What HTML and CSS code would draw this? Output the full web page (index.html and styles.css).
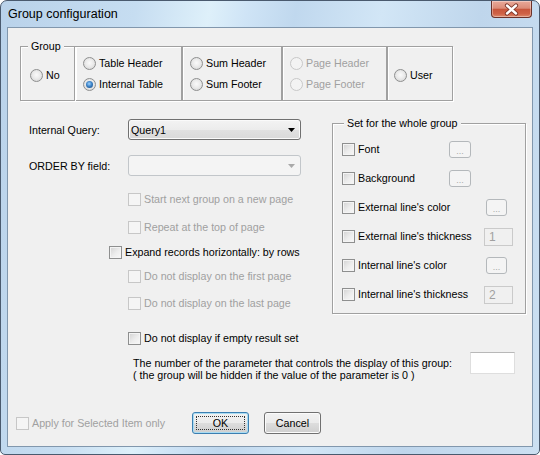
FILE: index.html
```html
<!DOCTYPE html>
<html>
<head>
<meta charset="utf-8">
<link rel="stylesheet" href="styles.css">
</head>
<body>
<div class="window">
  <div class="titlebar">
    <span class="title">Group configuration</span>
    <div class="close">
      <svg width="39" height="15" viewBox="0 0 39 15">
        <path d="M15 3.5 L24 11.5 M24 3.5 L15 11.5" stroke="#7a3326" stroke-width="4.2" stroke-linecap="round"/>
        <path d="M15 3.5 L24 11.5 M24 3.5 L15 11.5" stroke="#ffffff" stroke-width="2.4" stroke-linecap="round"/>
      </svg>
    </div>
  </div>
  <div class="client">
    <div class="group-row">
      <div class="gbox g-group">
        <span class="legend">Group</span>
        <label class="opt"><span class="radio"></span>No</label>
      </div>
      <div class="gbox g-table">
        <label class="opt"><span class="radio"></span>Table Header</label>
        <label class="opt"><span class="radio on"></span>Internal Table</label>
      </div>
      <div class="gbox g-sum">
        <label class="opt"><span class="radio"></span>Sum Header</label>
        <label class="opt"><span class="radio"></span>Sum Footer</label>
      </div>
      <div class="gbox g-page">
        <label class="opt dis"><span class="radio"></span>Page Header</label>
        <label class="opt dis"><span class="radio"></span>Page Footer</label>
      </div>
      <div class="gbox g-user">
        <label class="opt"><span class="radio"></span>User</label>
      </div>
    </div>

    <div class="main">
      <div class="left">
        <div class="frow">
          <span class="flabel">Internal Query:</span>
          <div class="combo"><span>Query1</span><svg width="7" height="4" viewBox="0 0 7 4"><path d="M0 0H7L3.5 4Z" fill="#000"/></svg></div>
        </div>
        <div class="frow">
          <span class="flabel">ORDER BY field:</span>
          <div class="combo dis"><span></span><svg width="7" height="4" viewBox="0 0 7 4"><path d="M0 0H7L3.5 4Z" fill="#a9a9a9"/></svg></div>
        </div>
        <label class="chk dis c1"><span class="box"></span>Start next group on a new page</label>
        <label class="chk dis c2"><span class="box"></span>Repeat at the top of page</label>
        <label class="chk c3"><span class="box"></span>Expand records horizontally: by rows</label>
        <label class="chk dis c4"><span class="box"></span>Do not display on the first page</label>
        <label class="chk dis c5"><span class="box"></span>Do not display on the last page</label>
      </div>

      <div class="setbox">
        <span class="legend">Set for the whole group</span>
        <div class="srow"><label class="chk w1"><span class="box"></span>Font</label><span class="dots">...</span></div>
        <div class="srow"><label class="chk w1"><span class="box"></span>Background</label><span class="dots">...</span></div>
        <div class="srow"><label class="chk w2"><span class="box"></span>External line's color</label><span class="dots sm">...</span></div>
        <div class="srow"><label class="chk w3"><span class="box"></span>External line's thickness</label><span class="num">1</span></div>
        <div class="srow"><label class="chk w2"><span class="box"></span>Internal line's color</label><span class="dots sm">...</span></div>
        <div class="srow"><label class="chk w3"><span class="box"></span>Internal line's thickness</label><span class="num">2</span></div>
      </div>
    </div>

    <label class="chk empty"><span class="box"></span>Do not display if empty result set</label>

    <div class="param">
      <div class="ptext">The number of the parameter that controls the display of this group:<br>( the group will be hidden if the value of the parameter is 0 )</div>
      <div class="pinput"></div>
    </div>

    <div class="bottom">
      <label class="chk dis apply"><span class="box"></span>Apply for Selected Item only</label>
      <div class="btn def"><span class="focus">OK</span></div>
      <div class="btn">Cancel</div>
    </div>
  </div>
</div>
</body>
</html>
```

FILE: styles.css
```css
* { box-sizing: border-box; }

body {
  margin: 0;
  width: 540px;
  height: 455px;
  overflow: hidden;
  font-family: "Liberation Sans", Arial, sans-serif;
  font-size: 10.7px;
  color: #000;
  background: #ffffff;
}

.window {
  width: 540px;
  height: 455px;
  border: 1px solid #4a5a6e;
  border-radius: 7px 7px 5px 5px;
  background: linear-gradient(100deg, #b9d2ea 0%, #c6ddf1 22%, #def0fa 34%, #cfe4f6 40%, #c0d8ee 48%, #d2e6f6 62%, #bfd6ec 78%, #cce0f2 100%);
  display: flex;
  flex-direction: column;
}

.titlebar {
  height: 26px;
  flex: none;
  display: flex;
  align-items: flex-start;
  justify-content: space-between;
}

.title {
  font-size: 12.5px;
  line-height: 15px;
  margin: 6px 0 0 7px;
  color: #000;
}

.close {
  width: 41px;
  height: 17px;
  margin-right: 7px;
  border: 1px solid #6b3129;
  border-top: none;
  border-radius: 0 0 4px 4px;
  background: linear-gradient(#e9aa9a 0%, #dc8c78 45%, #c8563c 52%, #cf6246 80%, #dd8a6c 100%);
  box-shadow: inset 0 0 0 1px rgba(255,255,255,0.35);
  display: flex;
  align-items: center;
  justify-content: center;
}

.client {
  flex: 1;
  margin: 0 6px 7px 6px;
  border: 1px solid #8197ad;
  background: #f0f0f0;
  padding-top: 18px;
}

/* top option boxes */
.group-row {
  display: flex;
  height: 55px;
  padding-left: 12px;
}

.gbox {
  border: 1px solid #a0a0a0;
  box-shadow: inset 1px 1px 0 #ffffff, 1px 1px 0 #ffffff;
  display: flex;
  flex-direction: column;
  justify-content: center;
  gap: 8px;
}

.g-group { width: 55px; padding: 3px 0 0 9px; position: relative; }
.g-table { width: 107px; padding-left: 7px; }
.g-sum { width: 100px; padding-left: 7px; }
.g-page { width: 105px; padding-left: 7px; }
.g-user { width: 66px; padding: 3px 0 0 6px; }

.legend {
  position: absolute;
  top: -7px;
  left: 7px;
  padding: 0 3px;
  line-height: 13px;
  background: #f0f0f0;
}

.opt {
  display: flex;
  align-items: center;
  gap: 3px;
  height: 13px;
  line-height: 13px;
  white-space: nowrap;
}

.radio {
  flex: none;
  width: 13px;
  height: 13px;
  border-radius: 50%;
  border: 1px solid #8e8f8f;
  background: radial-gradient(circle at 50% 45%, #fafafa 0%, #ebebeb 45%, #cfcfcf 100%);
  display: flex;
  align-items: center;
  justify-content: center;
}

.radio.on::after {
  content: "";
  width: 7px;
  height: 7px;
  border-radius: 50%;
  background: radial-gradient(circle at 45% 40%, #9fd3ff 0%, #3e84c8 45%, #123f74 100%);
}

.opt.dis { color: #a0a0a0; }
.opt.dis .radio {
  border-color: #c8c8c8;
  background: #f3f3f3;
}

/* main area */
.main {
  display: flex;
  margin-top: 15px;
  padding-left: 12px;
}

.left {
  width: 312px;
  padding: 3px 0 0 9px;
  display: flex;
  flex-direction: column;
  align-items: flex-start;
}

.frow {
  display: flex;
  align-items: center;
  height: 21px;
}
.frow + .frow { margin-top: 15px; }

.flabel { width: 99px; }

.combo {
  width: 173px;
  height: 21px;
  border: 1px solid #707070;
  border-radius: 3px;
  background: linear-gradient(#f3f3f3 0%, #ececec 50%, #e1e1e1 51%, #d9d9d9 100%);
  box-shadow: inset 0 0 0 1px #fafafa;
  display: flex;
  align-items: center;
  justify-content: space-between;
  padding: 0 5px 0 2px;
}

.combo.dis {
  border-color: #c2c6ca;
  background: #f4f4f4;
  box-shadow: none;
}

.chk {
  display: flex;
  align-items: center;
  gap: 3px;
  height: 13px;
  line-height: 13px;
  white-space: nowrap;
}

.box {
  flex: none;
  width: 13px;
  height: 13px;
  border: 1px solid #8e8f8f;
  background: linear-gradient(135deg, #d2d2d2 0%, #ededed 55%, #f8f8f8 100%);
  box-shadow: inset 0 0 0 1px #f4f4f4;
}

.chk.dis { color: #a0a0a0; }
.chk.dis .box {
  border-color: #c7c7c7;
  background: #f5f5f5;
  box-shadow: none;
}

.c1 { margin: 17px 0 0 99px; }
.c2 { margin: 15px 0 0 99px; }
.c3 { margin: 12px 0 0 80px; }
.c4 { margin: 11px 0 0 99px; }
.c5 { margin: 14px 0 0 99px; }

/* right group box */
.setbox {
  position: relative;
  width: 194px;
  height: 191px;
  margin-top: 7px;
  border: 1px solid #a0a0a0;
  box-shadow: inset 1px 1px 0 #ffffff, 1px 1px 0 #ffffff;
  padding: 17px 0 0 9px;
  display: flex;
  flex-direction: column;
  gap: 12px;
}

.setbox .legend { left: 11px; }

.srow {
  display: flex;
  align-items: center;
  height: 17px;
}

.w1 { width: 107px; }
.w2 { width: 144px; }
.w3 { width: 142px; }

.dots {
  width: 22px;
  height: 17px;
  border: 1px solid #b4b8bb;
  border-radius: 3px;
  background: #f4f4f4;
  color: #a8a8a8;
  font-size: 9px;
  line-height: 17px;
  text-align: center;
  padding-top: 1px;
}
.dots.sm { width: 21px; }

.num {
  width: 29px;
  height: 18px;
  border: 1px solid #cacaca;
  background: #f0f0f0;
  color: #a0a0a0;
  padding-left: 4px;
  line-height: 16px;
  font-size: 12px;
}

.empty { margin: 18px 0 0 120px; }

.param {
  display: flex;
  align-items: flex-start;
  margin-top: 7px;
  padding: 0 17px 0 125px;
}

.ptext {
  margin-top: 5px;
  line-height: 12px;
}

.pinput {
  margin-left: auto;
  width: 45px;
  height: 22px;
  background: #ffffff;
  border: 1px solid #dedede;
  border-top-color: #b8b8b8;
}

.bottom {
  display: flex;
  align-items: center;
  height: 22px;
  margin-top: 31px;
  padding-left: 8px;
}

.apply { width: 176px; }

.btn {
  width: 57px;
  height: 22px;
  border: 1px solid #707070;
  border-radius: 3px;
  background: linear-gradient(#f2f2f2 0%, #ebebeb 50%, #dddddd 51%, #cfcfcf 100%);
  box-shadow: inset 0 0 0 1px #fbfbfb;
  display: flex;
  align-items: center;
  justify-content: center;
}
.btn + .btn { margin-left: 15px; }

.btn.def {
  border-color: #3c7fb1;
  box-shadow: inset 0 0 0 1px #a9dcf3;
  padding: 3px;
}

.focus {
  flex: 1;
  height: 100%;
  border: 1px dotted #333333;
  display: flex;
  align-items: center;
  justify-content: center;
}
```
